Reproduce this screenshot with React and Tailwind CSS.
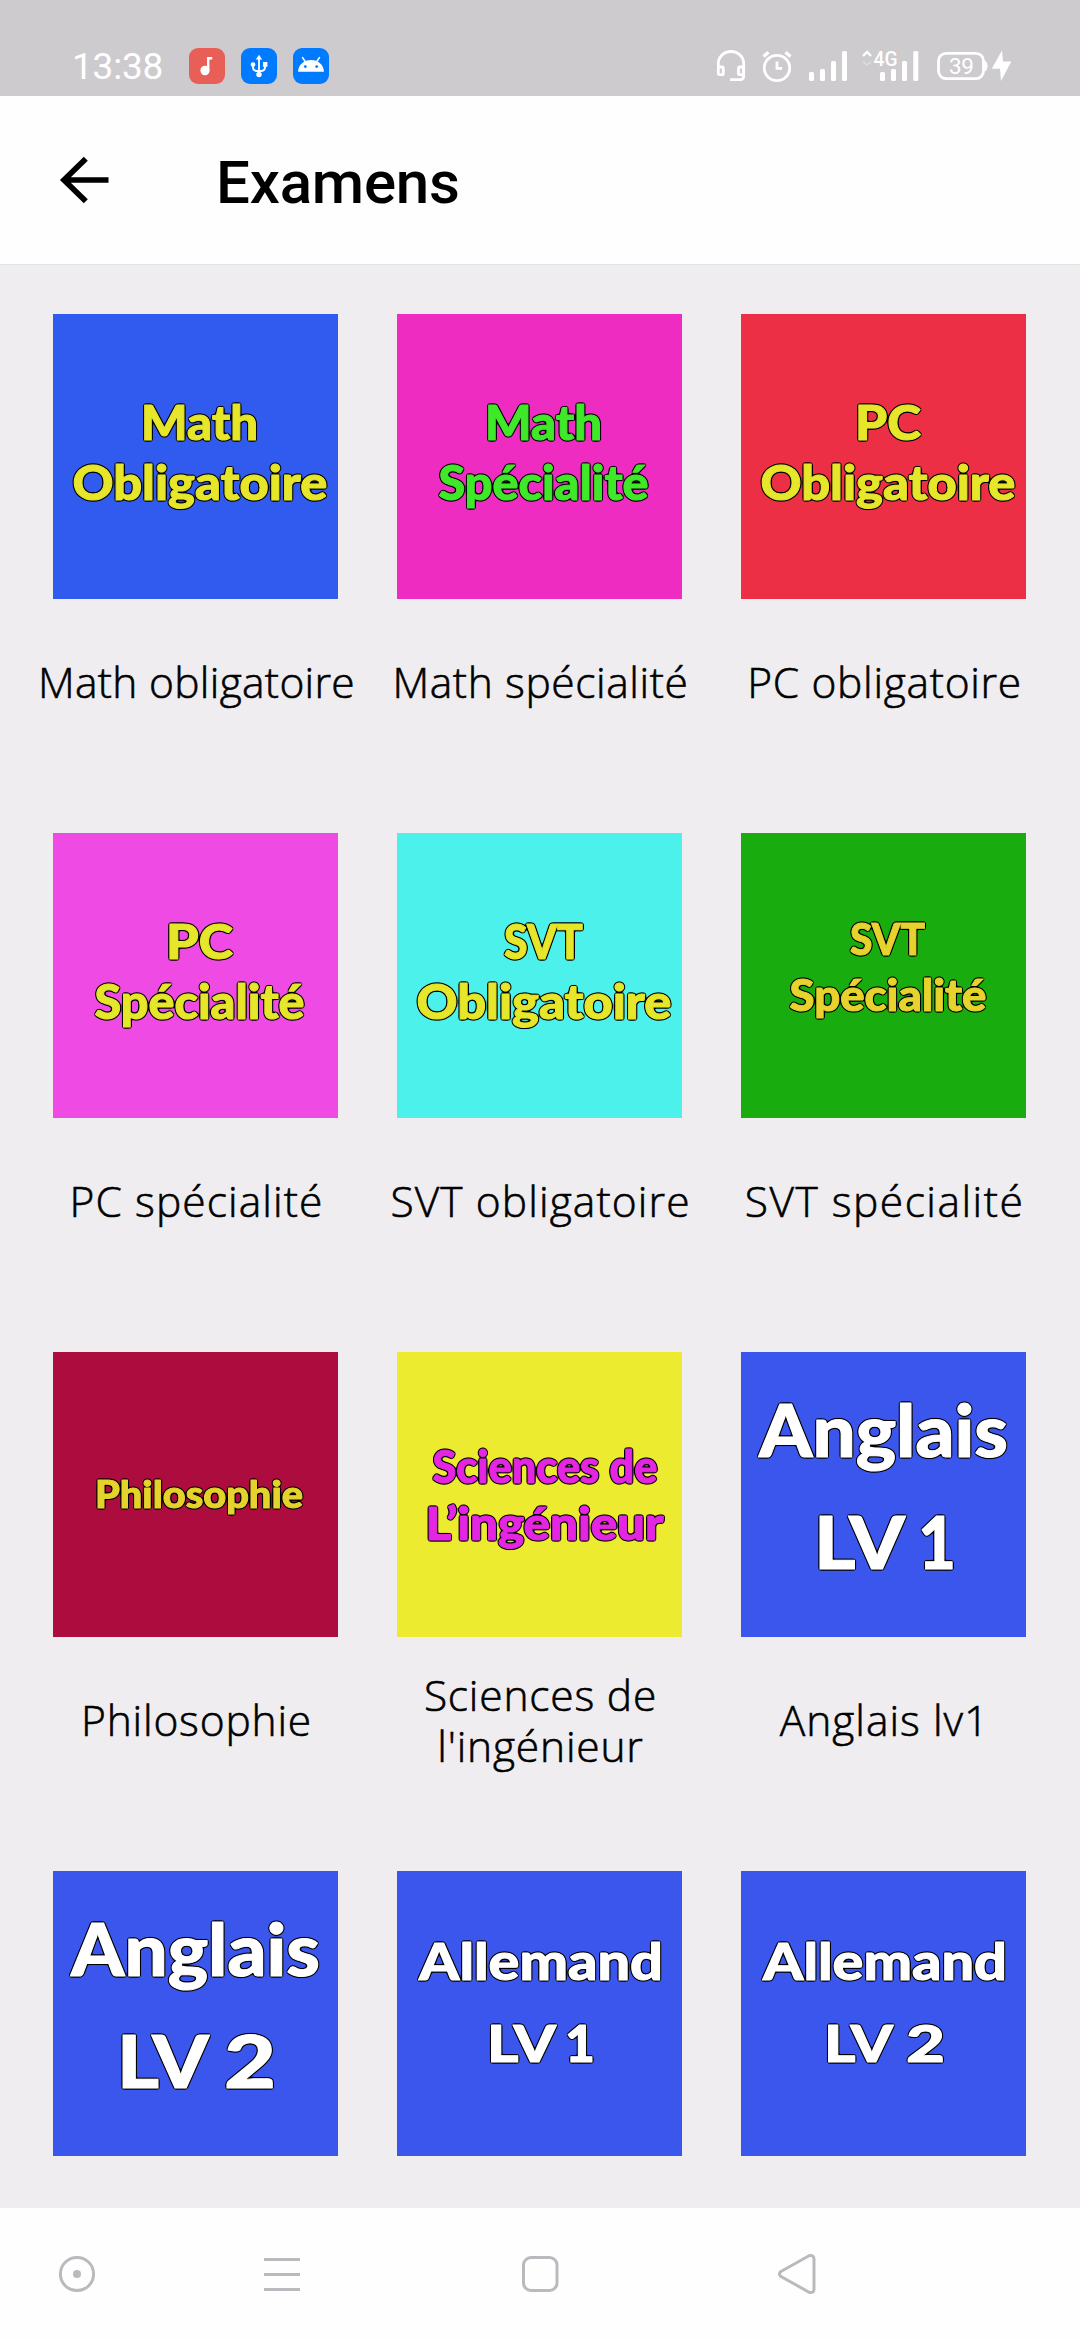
const EXAMS = [
  { label: 'Math obligatoire', tracking: 'tracking-[0.3px]', bg: 'bg-[#305bee]', fill: '#e6e62a', size: 48, words: [['Math', 88, 117, 126], ['Obligatoire', 19.5, 255, 186]] },
  { label: 'Math spécialité', tracking: 'tracking-[0.6px]', bg: 'bg-[#ef2cc1]', fill: '#40e82a', size: 48, words: [['Math', 88, 117, 126], ['Spécialité', 41.5, 210, 186]] },
  { label: 'PC obligatoire', tracking: 'tracking-[0.7px]', bg: 'bg-[#ed2f46]', fill: '#e6e62a', size: 48, words: [['PC', 114, 66, 126], ['Obligatoire', 19.5, 255, 186]] },
  { label: 'PC spécialité', tracking: 'tracking-[1.1px]', bg: 'bg-[#f04ae4]', fill: '#e6e62a', size: 48, words: [['PC', 113, 67, 126], ['Spécialité', 41.5, 210, 186]] },
  { label: 'SVT obligatoire', tracking: 'tracking-[1.1px]', bg: 'bg-[#4cf1eb]', fill: '#e6e62a', size: 48, words: [['SVT', 107, 79, 126], ['Obligatoire', 19.5, 255, 186]] },
  { label: 'SVT spécialité', tracking: 'tracking-[1.5px]', bg: 'bg-[#18ac0f]', fill: '#e7d32e', size: 44, words: [['SVT', 109, 75, 122], ['Spécialité', 48.5, 197, 178]] },
  { label: 'Philosophie', tracking: 'tracking-[0.8px]', bg: 'bg-[#ac0c3e]', fill: '#e5d32c', size: 38, words: [['Philosophie', 42, 208, 156]] },
  { label: "Sciences de l'ingénieur", tracking: 'tracking-[0.8px]', bg: 'bg-[#edeb2f]', fill: '#e426e2', size: 45, words: [['Sciences de', 35.5, 225, 131], ['L’ingénieur', 28.5, 238, 187.5]] },
  { label: 'Anglais lv1', tracking: 'tracking-[1px]', bg: 'bg-[#3a56ed]', fill: '#ffffff', size: 72, words: [['Anglais', 18, 249, 105], ['LV', 73, 91, 217], ['1', 177, 38, 217]] },
  { label: null, bg: 'bg-[#3a56ed]', fill: '#ffffff', size: 72, words: [['Anglais', 18, 249, 105], ['LV', 64, 92, 217], ['2', 171, 52, 217]] },
  { label: null, bg: 'bg-[#3a56ed]', fill: '#ffffff', size: 52, words: [['Allemand', 22, 244, 109], ['LV', 90, 69, 191], ['1', 168, 30, 191]] },
  { label: null, bg: 'bg-[#3a56ed]', fill: '#ffffff', size: 52, words: [['Allemand', 22, 244, 109], ['LV', 83, 69, 191], ['2', 165, 39, 191]] },
];

function Cover({ exam, id }) {
  return (
    <svg viewBox="0 0 285 285" className={`block h-[285px] w-[285px] ${exam.bg}`}>
      {/* Dark, rounded outline grown evenly around the lettering */}
      <filter id={id} x="0" y="0" width="285" height="285" filterUnits="userSpaceOnUse" colorInterpolationFilters="sRGB">
        <feGaussianBlur in="SourceAlpha" stdDeviation="1.15" />
        <feComponentTransfer result="outline">
          <feFuncA type="linear" slope="5" intercept="-0.35" />
        </feComponentTransfer>
        <feMerge>
          <feMergeNode in="outline" />
          <feMergeNode in="SourceGraphic" />
        </feMerge>
      </filter>
      <g filter={`url(#${id})`}>
        {exam.words.map(([text, x, width, y], i) => (
          <text
            key={i}
            x={x}
            y={y}
            textLength={width}
            lengthAdjust="spacingAndGlyphs"
            fontFamily="Lato, sans-serif"
            fontWeight="900"
            fontSize={exam.size}
            fill={exam.fill}
            stroke={exam.fill}
            strokeWidth="1"
            strokeLinejoin="round"
          >
            {text}
          </text>
        ))}
      </g>
    </svg>
  );
}

function ExamCard({ exam, id }) {
  return (
    <div className="flex flex-col items-center">
      <Cover exam={exam} id={id} />
      <div
        className={`flex h-[168px] w-[338px] items-center justify-center pb-[3px] pl-[2px] text-center font-['Open_Sans',sans-serif] text-[42.5px] leading-[51px] font-light text-black [-webkit-text-stroke:0.6px_black] ${exam.tracking ?? ''}`}
      >
        <span className="max-w-[330px]">{exam.label}</span>
      </div>
    </div>
  );
}

function StatusBar() {
  return (
    <div className="flex h-24 items-start bg-[#cdcbce] pt-12 pl-[72px]">
      <div className="w-[117px] font-['Roboto',sans-serif] text-[37px] leading-[37px] tracking-[-0.2px] whitespace-nowrap text-white">13:38</div>
      <div className="flex gap-4">
        <svg width="36" height="36" viewBox="0 0 36 36">
          <rect width="36" height="36" rx="9" fill="#e85f58" />
          <ellipse cx="16" cy="22.5" rx="4.6" ry="4.8" fill="#fff" />
          <path d="M19.2 22V10.3h4" fill="none" stroke="#fff" strokeWidth="2.4" />
        </svg>
        <svg width="36" height="36" viewBox="0 0 36 36">
          <rect width="36" height="36" rx="9" fill="#007aff" />
          <path d="M18 10v16M12 17v2.5q0 3 3.5 3.5h5q3.5-.5 3.5-3.5V17" fill="none" stroke="#fff" strokeWidth="1.8" />
          <path d="M18 6.8l3.2 4.7h-6.4z" fill="#fff" />
          <circle cx="12" cy="16.5" r="2.3" fill="#fff" />
          <rect x="22" y="14" width="4.4" height="4.8" fill="#fff" />
          <circle cx="18" cy="26.5" r="2.7" fill="#fff" />
        </svg>
        <svg width="36" height="36" viewBox="0 0 36 36">
          <rect width="36" height="36" rx="9" fill="#007aff" />
          <path d="M5 23.7C5.5 16.5 11 12 18 12s12.5 4.5 13 11.7z" fill="#fff" />
          <path d="M9.5 9.5l3 4.5M26.5 9.5l-3 4.5" stroke="#fff" strokeWidth="1.5" strokeLinecap="round" />
          <circle cx="12.3" cy="18.6" r="1.4" fill="#007aff" />
          <circle cx="23.7" cy="18.6" r="1.4" fill="#007aff" />
        </svg>
      </div>
      <div className="ml-[387px] flex">
        <svg width="30" height="36" viewBox="0 0 30 36" fill="none" stroke="#fff" strokeWidth="2.8">
          <path d="M2.3 19v-3.5a12.7 12 0 0 1 25.4 0V28q0 3.7-3.5 3.7H14" />
          <rect x="2.3" y="19" width="5" height="7.7" rx="1.2" />
          <rect x="22.5" y="19" width="5" height="7.7" rx="1.2" />
        </svg>
        <svg className="ml-4" width="32" height="36" viewBox="0 0 32 36" fill="none" stroke="#fff">
          <circle cx="15" cy="20" r="12.7" strokeWidth="2.8" />
          <path d="M1.5 8.5l5-4.3M28.5 8.5l-5-4.3" strokeWidth="3.2" />
          <path d="M15 13.5V20.3h5" strokeWidth="2.8" />
        </svg>
        <svg className="ml-3.5" width="40" height="36" viewBox="0 0 40 36" fill="#fff">
          <rect x="1" y="24" width="5" height="9" rx="1.5" />
          <rect x="12" y="21" width="5" height="12" rx="1.5" />
          <rect x="23" y="13" width="5" height="20" rx="1.5" />
          <rect x="34" y="3" width="5" height="30" rx="1.5" />
        </svg>
        <svg className="ml-3.5" width="58" height="36" viewBox="0 0 58 36" fill="#fff">
          <path d="M1 8l4-4 4 4" fill="none" stroke="#fff" strokeWidth="2.4" />
          <path d="M1 13.5l4 3.5 4-3.5" fill="none" stroke="#dddcde" strokeWidth="1.5" />
          <text x="11.5" y="18" fontFamily="Roboto, sans-serif" fontWeight="500" fontSize="20" textLength="24" lengthAdjust="spacingAndGlyphs">4G</text>
          <rect x="18" y="24" width="5" height="9" rx="1.5" />
          <rect x="29" y="21" width="5" height="12" rx="1.5" />
          <rect x="40" y="13" width="5" height="20" rx="1.5" />
          <rect x="51.3" y="3" width="5" height="30" rx="1.5" />
        </svg>
        <svg className="ml-[17px]" width="78" height="36" viewBox="0 0 78 36" fill="#fff">
          <rect x="1.5" y="5.4" width="45" height="25.2" rx="7.5" fill="none" stroke="#fff" strokeWidth="2.8" />
          <path d="M47.5 12.5q3 1 3 5.5t-3 5.5z" />
          <text x="12" y="25.5" fontFamily="Roboto, sans-serif" fontSize="22.5" textLength="25" lengthAdjust="spacing">39</text>
          <path d="M65 2.500L54.700 20.800H63L64 33l10.300-19.500H66z" />
        </svg>
      </div>
    </div>
  );
}

function Header() {
  return (
    <header className="flex h-[168px] items-center bg-[#fefefe] pl-[58px]">
      <svg width="52" height="52" viewBox="0 0 52 52" fill="none" stroke="#000" strokeWidth="5.7">
        <path d="M50.5 26H6M27.8 4.7L6 26l21.800 21.300" />
      </svg>
      <h1 className="ml-[106px] pt-[5px] font-['Roboto',sans-serif] text-[60px] leading-[70px] font-medium tracking-[-0.2px] text-black">Examens</h1>
    </header>
  );
}

function NavBar() {
  return (
    <nav className="flex h-[132px] items-center bg-[#fefefe] pl-[58px]">
      <svg width="38" height="38" viewBox="0 0 38 38">
        <circle cx="19" cy="19" r="16.6" fill="none" stroke="#bbb9bd" strokeWidth="3" />
        <circle cx="19" cy="19" r="4" fill="#bbb9bd" />
      </svg>
      <svg className="ml-[168px]" width="36" height="38" viewBox="0 0 36 38" stroke="#bbb9bd" strokeWidth="3">
        <path d="M0 4.500h36M0 19.500h36M0 34.500h36" />
      </svg>
      <svg className="ml-[221px]" width="38" height="38" viewBox="0 0 38 38">
        <rect x="2.5" y="2.5" width="33.5" height="33" rx="7.5" fill="none" stroke="#bbb9bd" strokeWidth="3" />
      </svg>
      <svg className="ml-[218px]" width="40" height="42" viewBox="0 0 40 42">
        <path d="M3.500 18.800Q1.500 21 3.500 23.200L32 39.200Q37 40.500 37 36V6Q37 1.500 32 2.800z" fill="none" stroke="#bbb9bd" strokeWidth="3" strokeLinejoin="round" />
      </svg>
    </nav>
  );
}

export default function App() {
  return (
    <div className="flex h-[2340px] w-[1080px] flex-col overflow-hidden">
      <StatusBar />
      <Header />
      <main className="grid h-[1944px] grid-cols-[repeat(3,344px)] content-start gap-y-[66px] overflow-hidden border-t border-[#e2e1e3] bg-[#efedf0] pt-[49px] pl-[23.5px]">
        {EXAMS.map((exam, i) => (
          <ExamCard key={i} exam={exam} id={`outline-${i}`} />
        ))}
      </main>
      <NavBar />
    </div>
  );
}
